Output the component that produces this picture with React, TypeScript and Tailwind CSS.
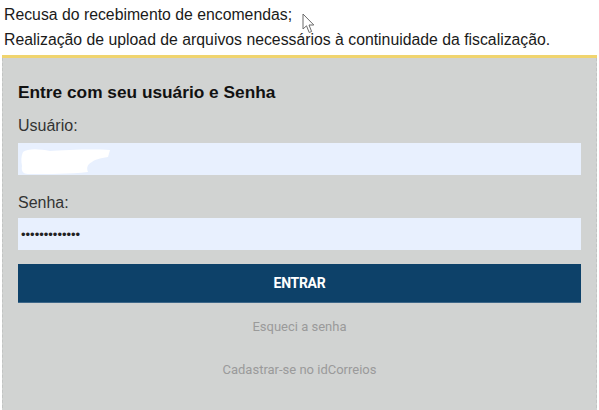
import React from "react";

// Mouse pointer drawn over the intro text
function Pointer() {
  return (
    <svg width="16" height="22" viewBox="0 0 16 22" className="absolute left-[302px] top-[13px]">
      <path
        d="M1 1 L1 16 L4.5 12.8 L7.2 19.5 L9.6 18.5 L7 12 L11.8 12 Z"
        fill="#ffffff"
        stroke="#6b6b6b"
        strokeWidth="1"
        strokeLinejoin="round"
      />
    </svg>
  );
}

// White redaction scribble over the username
function Redaction() {
  return (
    <svg width="92" height="28" viewBox="0 0 92 28" className="absolute left-[2px] top-[4px]">
      <path
        d="M3 5 C8 1 20 2 30 4 C45 3 72 2 90 3 L88 10 C80 11 74 13 72 15 C68 17 66 20 68 25 C50 27 30 27 8 27 C3 27 1 24 2 19 C1 14 1 9 3 5 Z"
        fill="#ffffff"
      />
    </svg>
  );
}

export default function App() {
  return (
    <div className="relative w-[599px] h-[410px] overflow-hidden bg-white font-['Liberation_Sans',Arial,sans-serif]">
      <div className="px-[4px] pt-[2px] pb-[3px] text-[15.8px] leading-[25px] text-[#1a1a1a]">
        <p>Recusa do recebimento de encomendas;</p>
        <p>Realização de upload de arquivos necessários à continuidade da fiscalização.</p>
      </div>
      <Pointer />

      <div className="mx-[2px] h-[3px] bg-[#f0d46e]" />
      <div className="mx-[2px] h-[360px] border-x border-dashed border-[#c2c4c3] bg-[#d1d3d2] px-[15px] pt-[22px]">
        <h2 className="text-[17.3px] font-bold leading-[24px] text-[#111]">Entre com seu usuário e Senha</h2>

        <label className="mt-[11px] block text-[16px] leading-[22px] text-[#333]">Usuário:</label>
        <div className="relative mt-[6px] h-[32px] bg-[#e8f0fe]">
          <Redaction />
        </div>

        <label className="mt-[17px] block text-[16px] leading-[22px] text-[#333]">Senha:</label>
        <div className="mt-[4px] flex h-[32px] items-center bg-[#e8f0fe] px-[3px]">
          <span className="text-[13px] leading-none text-[#222]">•••••••••••••</span>
        </div>

        <button className="mt-[14px] flex h-[39px] w-full items-center justify-center border-b border-[#3d6688] bg-[#0d4169] font-['Roboto',sans-serif] text-[14px] font-bold tracking-[-0.3px] text-white">
          ENTRAR
        </button>

        <div className="flex flex-col items-center font-['Roboto',sans-serif] text-[13px] text-[#9a9a9a]">
          <a className="mt-[15px] leading-[18px]">Esqueci a senha</a>
          <a className="mt-[25px] leading-[18px]">Cadastrar-se no idCorreios</a>
        </div>
      </div>
    </div>
  );
}
